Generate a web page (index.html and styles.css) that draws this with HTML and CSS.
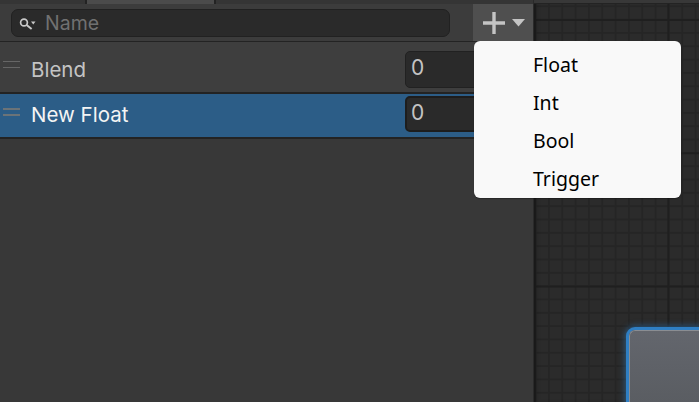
FILE: index.html
```html
<!DOCTYPE html>
<html lang="en">
<head>
  <meta charset="UTF-8" />
  <title>Parameters</title>
  <link rel="stylesheet" href="styles.css">
</head>
<body>
  <div class="panel">
    <div class="tabs">
      <div class="tab"></div>
      <div class="tab active"></div>
      <div class="tab"></div>
    </div>

    <div class="toolbar">
      <div class="search">
        <svg class="search-icon" width="18" height="14" viewBox="0 0 18 14">
          <circle cx="5" cy="6.5" r="3.4" fill="none" stroke="#c8c8c8" stroke-width="1.7"/>
          <path d="M7.6 9 L12.6 13" stroke="#c8c8c8" stroke-width="2" fill="none"/>
          <path d="M12 5.5 H16.5 L14.25 8.5 Z" fill="#c8c8c8"/>
        </svg>
        <span class="placeholder">Name</span>
      </div>
      <div class="add-btn">
        <svg width="22" height="22" viewBox="0 0 22 22">
          <path d="M0 11 H22 M11 0 V22" stroke="#c4c4c4" stroke-width="3.4" fill="none"/>
        </svg>
        <svg width="13" height="8" viewBox="0 0 13 8">
          <path d="M0 0 H13 L6.5 7.5 Z" fill="#c4c4c4"/>
        </svg>
      </div>
    </div>

    <div class="row">
      <div class="handle"></div>
      <span class="row-name">Blend</span>
      <div class="value">0</div>
    </div>
    <div class="row selected">
      <div class="handle"></div>
      <span class="row-name">New Float</span>
      <div class="value">0</div>
    </div>
  </div>

  <div class="graph">
    <div class="graph-top"></div>
    <div class="node"></div>
  </div>

  <div class="menu">
    <div class="menu-item">Float</div>
    <div class="menu-item">Int</div>
    <div class="menu-item">Bool</div>
    <div class="menu-item">Trigger</div>
  </div>
</body>
</html>
```

FILE: styles.css
```css
body {
  margin: 0;
  width: 699px;
  height: 402px;
  overflow: hidden;
  display: flex;
  font-family: Inter, sans-serif;
  background: #383838;
}
.panel {
  width: 533px;
  height: 402px;
  flex-shrink: 0;
  background: #383838;
  border-right: 1px solid #2a2a2a;
}
.tabs {
  height: 4px;
  display: flex;
  gap: 2px;
  background: #232323;
}
.tab {
  width: 85px;
  background: #353535;
}
.tab.active {
  width: 127px;
  background: #4b4b4b;
}
.tab:last-child {
  flex: 1;
}
.toolbar {
  height: 37px;
  display: flex;
  align-items: center;
  justify-content: space-between;
  padding-left: 11px;
  background: #3c3c3c;
  border-bottom: 1px solid #232323;
}
.search {
  width: 439px;
  height: 28px;
  margin-top: 1px;
  display: flex;
  align-items: center;
  box-sizing: border-box;
  padding-left: 7px;
  background: #2a2a2a;
  border: 1px solid #212121;
  border-radius: 7px;
}
.search-icon {
  margin-right: 8px;
}
.placeholder {
  font-size: 19.5px;
  color: #717171;
}
.add-btn {
  width: 60px;
  height: 37px;
  display: flex;
  align-items: center;
  box-sizing: border-box;
  padding-left: 10px;
  gap: 7px;
  background: #4f4f4f;
}
.row {
  height: 50px;
  display: flex;
  align-items: flex-start;
  background: #3e3e3e;
  border-bottom: 2px solid #232323;
}
.row.selected {
  height: 43px;
  background: #2c5d87;
}
.handle {
  width: 17px;
  height: 5px;
  margin: 19px 0 0 3px;
  border-top: 1px solid #666;
  border-bottom: 1px solid #666;
}
.selected .handle {
  height: 4px;
  margin-top: 14px;
  border-top: 2px solid #6b7378;
  border-bottom: 2px solid #6b7378;
}
.row-name {
  margin: 16px 0 0 11px;
  font-size: 20.5px;
  line-height: 24px;
  color: #c4c4c4;
}
.selected .row-name {
  margin-top: 9px;
  color: #f4f4f4;
}
.value {
  position: absolute;
  left: 405px;
  width: 124px;
  height: 37px;
  box-sizing: border-box;
  padding-left: 5px;
  font-size: 21px;
  line-height: 31px;
  color: #c4c4c4;
  background: #2a2a2a;
  border: 1px solid #212121;
  border-radius: 5px;
}
.row .value {
  top: 51px;
}
.row.selected .value {
  top: 96px;
  height: 36px;
  border-width: 2px;
  border-color: #1d1d1d;
  padding-left: 4px;
  line-height: 30px;
}
.graph {
  flex: 1;
  position: relative;
  overflow: hidden;
  background-color: #2b2b2b;
  background-image:
    linear-gradient(90deg, #1f1f1f 2px, transparent 2px),
    linear-gradient(#1f1f1f 2px, transparent 2px),
    linear-gradient(90deg, #252525 2px, transparent 2px),
    linear-gradient(#252525 2px, transparent 2px);
  background-size: 133.3px 133.3px, 133.3px 133.3px, 13.33px 13.33px, 13.33px 13.33px;
  background-position: 0 19px, 0 19px, 0.67px 5.3px, 0.67px 5.3px;
  box-shadow: inset 4px 0 4px -2px rgba(0, 0, 0, 0.25);
}
.graph-top {
  height: 3px;
  background: #383838;
  border-bottom: 1px solid #232323;
}
.node {
  position: absolute;
  left: 95px;
  top: 330px;
  right: 0;
  bottom: 0;
  background: linear-gradient(#63666d, #5a5d62);
  border-top: 1px solid #8a8d92;
  border-left: 1px solid #8a8d92;
  border-radius: 6px 0 0 0;
  box-shadow: 0 0 0 3px #2f7fc4, 0 0 6px 4px rgba(47, 127, 196, 0.55);
}
.menu {
  position: absolute;
  left: 474px;
  top: 41px;
  width: 207px;
  height: 157px;
  box-sizing: border-box;
  padding-top: 5px;
  background: #f9f9f9;
  border-radius: 6px;
  box-shadow: 0 1px 1px rgba(0, 0, 0, 0.3);
}
.menu-item {
  height: 38px;
  padding-left: 59px;
  font-family: "Noto Sans", sans-serif;
  font-size: 19.5px;
  line-height: 38px;
  color: #000;
}
```
